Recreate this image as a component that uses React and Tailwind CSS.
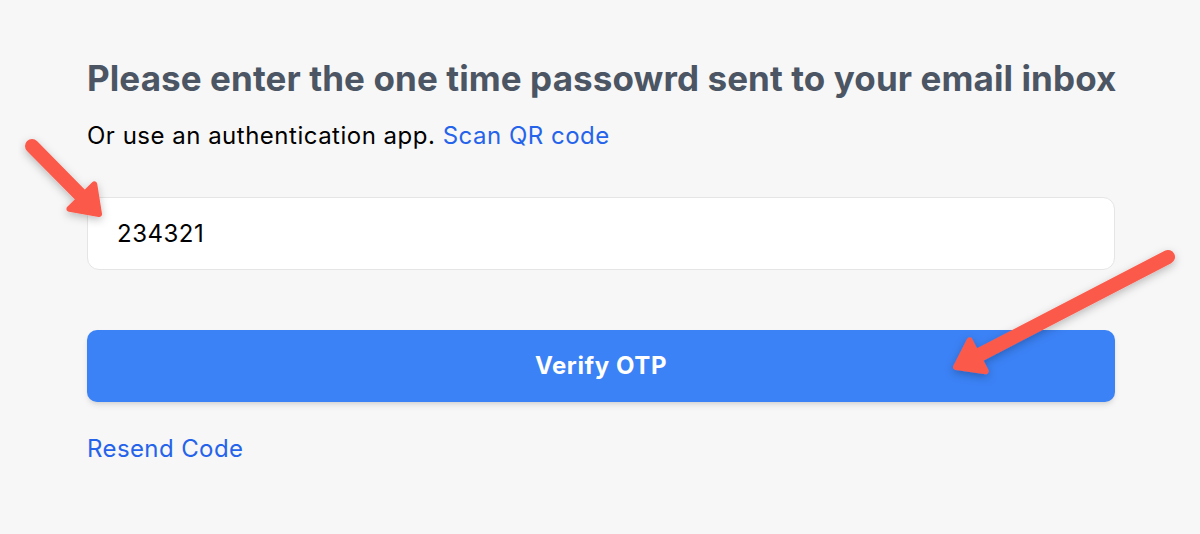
import React from 'react';

const Arrow = ({ x1, y1, x2, y2 }) => {
  // arrow drawn from tail (x1,y1) to tip (x2,y2)
  const angle = Math.atan2(y2 - y1, x2 - x1);
  const len = 30;
  const spread = 0.62;
  const ax = x2 - len * Math.cos(angle - spread);
  const ay = y2 - len * Math.sin(angle - spread);
  const bx = x2 - len * Math.cos(angle + spread);
  const by = y2 - len * Math.sin(angle + spread);
  const sx = x2 - 18 * Math.cos(angle);
  const sy = y2 - 18 * Math.sin(angle);
  return (
    <g filter="url(#shadow)">
      <line x1={x1} y1={y1} x2={sx} y2={sy} stroke="#fb5a4b" strokeWidth="14" strokeLinecap="round" />
      <polygon
        points={`${x2},${y2} ${ax},${ay} ${bx},${by}`}
        fill="#fb5a4b"
        stroke="#fb5a4b"
        strokeWidth="6"
        strokeLinejoin="round"
      />
    </g>
  );
};

const App = () => {
  return (
    <div className="relative w-[1200px] h-[534px] bg-[#f7f7f7] font-['Inter',sans-serif] overflow-hidden">
      <div className="w-[1028px] ml-[87px] pt-[57px]">
        <h1 className="text-[35px] font-bold text-[#4b5563] leading-[42px] tracking-[0.1px] whitespace-nowrap">
          Please enter the one time passowrd sent to your email inbox
        </h1>
        <p className="mt-[21px] text-[24px] text-black leading-[32px] tracking-[0.5px]">
          Or use an authentication app. <a className="text-[#2563eb]">Scan QR code</a>
        </p>
        <div className="mt-[45px] h-[73px] bg-white border border-[#e5e5e5] rounded-[12px] flex items-center px-[29px] text-[24px] text-black tracking-[0.5px]">
          234321
        </div>
        <button className="mt-[60px] w-full h-[72px] bg-[#3b82f6] rounded-[10px] shadow-md text-white text-[24px] font-bold tracking-[0.6px]">
          Verify OTP
        </button>
        <div className="mt-[31px] text-[24px] text-[#2563eb] leading-[32px] tracking-[0.4px]">Resend Code</div>
      </div>

      <svg className="absolute inset-0 pointer-events-none" width="1200" height="534">
        <defs>
          <filter id="shadow" x="-20%" y="-20%" width="140%" height="140%">
            <feDropShadow dx="0" dy="3" stdDeviation="4" floodColor="#000" floodOpacity="0.25" />
          </filter>
        </defs>
        <Arrow x1={32} y1={146} x2={99} y2={214} />
        <Arrow x1={1168} y1={257} x2={956} y2={367} />
      </svg>
    </div>
  );
};

export default App;
